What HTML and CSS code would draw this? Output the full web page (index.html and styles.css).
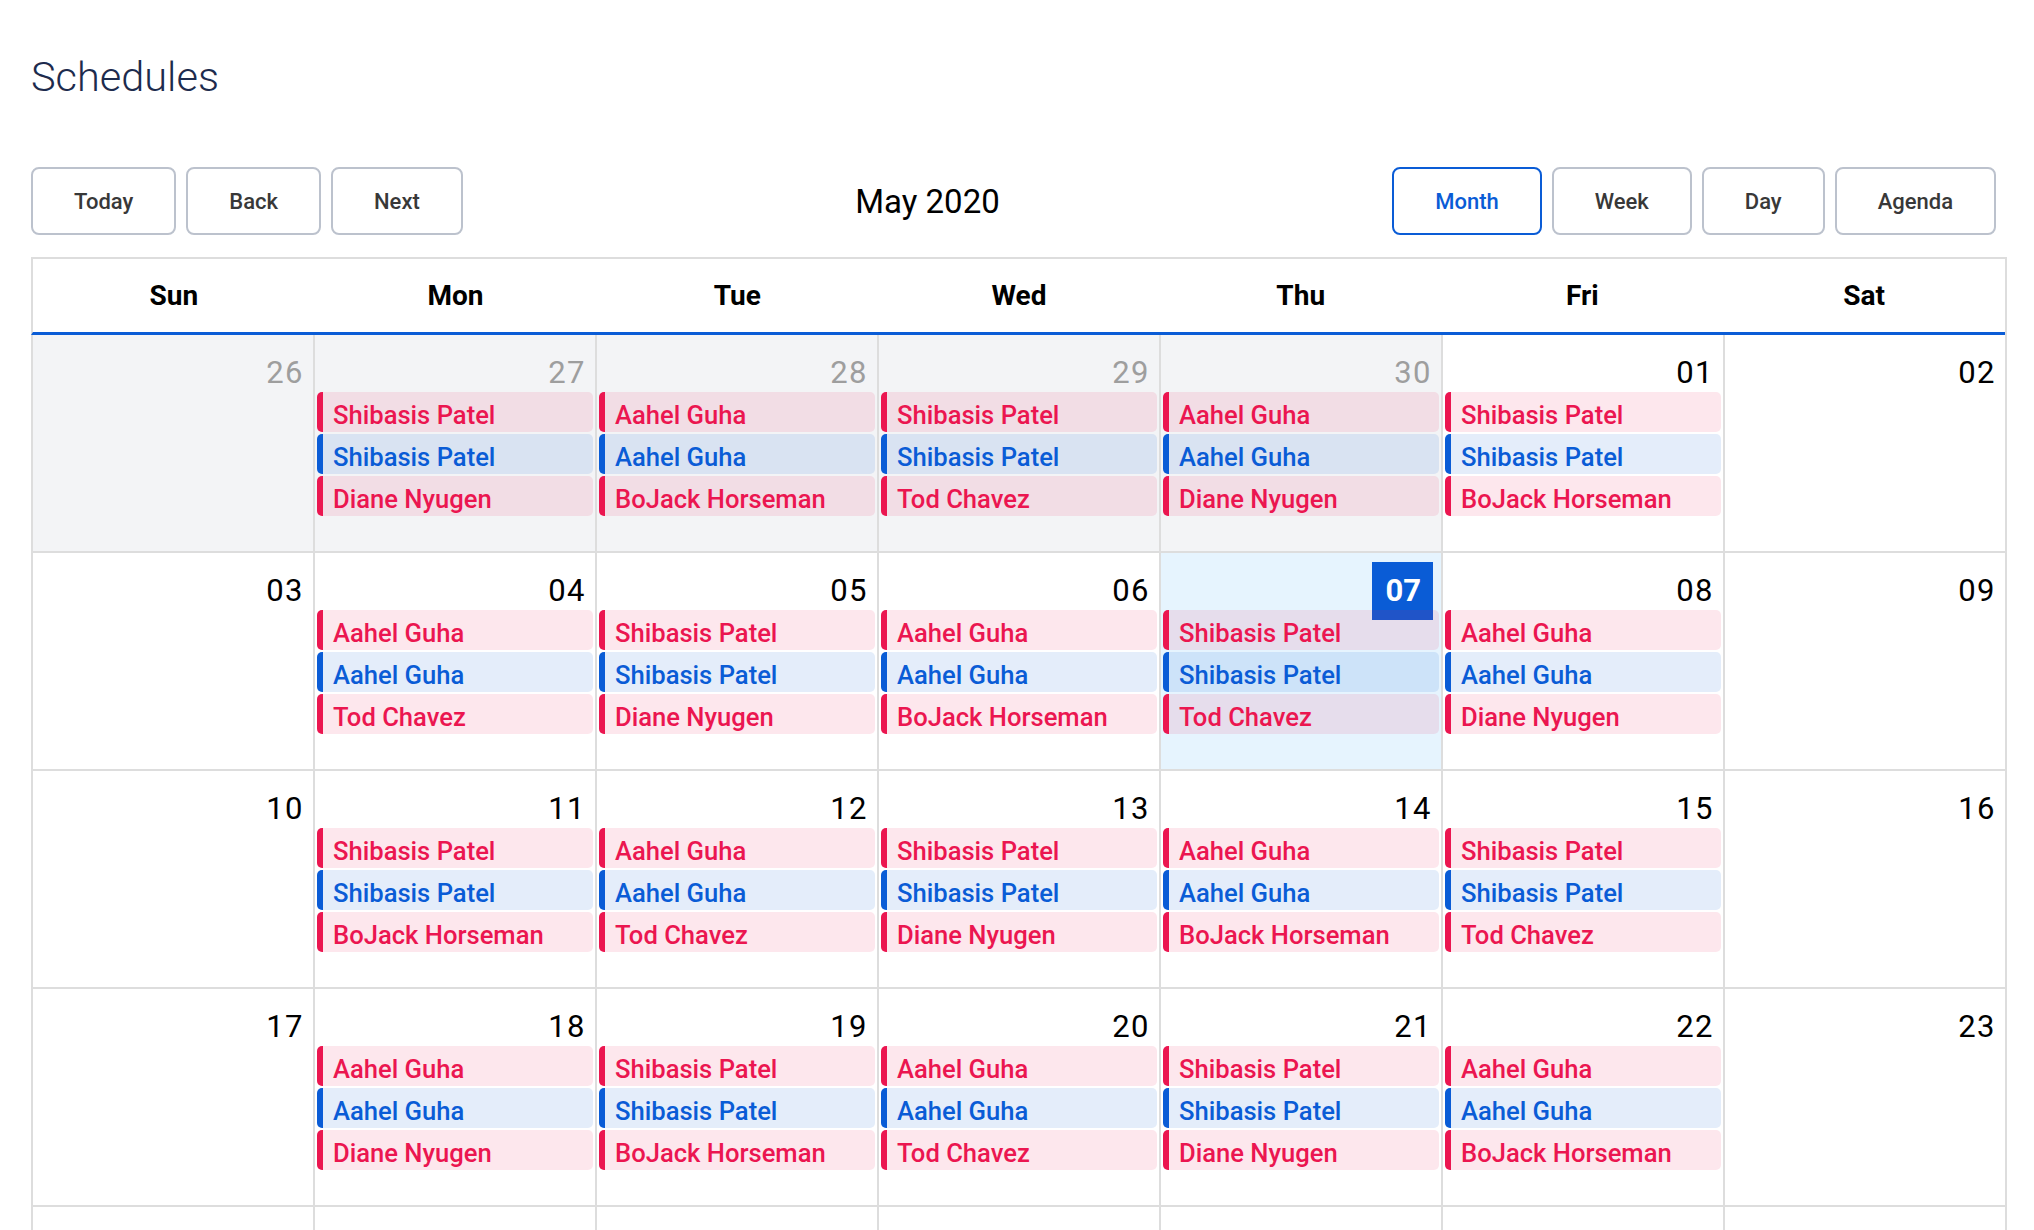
FILE: index.html
```html
<!DOCTYPE html>
<html lang="en">
<head>
<meta charset="utf-8">
<title>Schedules</title>
<link rel="stylesheet" href="styles.css">
</head>
<body>
<div class="page">
  <h1 class="title">Schedules</h1>
  <div class="toolbar">
    <div class="btn-group">
      <button class="btn">Today</button>
      <button class="btn">Back</button>
      <button class="btn">Next</button>
    </div>
    <span class="label">May 2020</span>
    <div class="btn-group">
      <button class="btn active">Month</button>
      <button class="btn">Week</button>
      <button class="btn">Day</button>
      <button class="btn">Agenda</button>
    </div>
  </div>

  <div class="calendar">
    <div class="head">
      <div class="head-cell">Sun</div>
      <div class="head-cell">Mon</div>
      <div class="head-cell">Tue</div>
      <div class="head-cell">Wed</div>
      <div class="head-cell">Thu</div>
      <div class="head-cell">Fri</div>
      <div class="head-cell">Sat</div>
    </div>

    <div class="week">
      <div class="day off"><div class="date"><span>26</span></div></div>
      <div class="day off"><div class="date"><span>27</span></div>
        <div class="event red">Shibasis Patel</div><div class="event blue">Shibasis Patel</div><div class="event red">Diane Nyugen</div></div>
      <div class="day off"><div class="date"><span>28</span></div>
        <div class="event red">Aahel Guha</div><div class="event blue">Aahel Guha</div><div class="event red">BoJack Horseman</div></div>
      <div class="day off"><div class="date"><span>29</span></div>
        <div class="event red">Shibasis Patel</div><div class="event blue">Shibasis Patel</div><div class="event red">Tod Chavez</div></div>
      <div class="day off"><div class="date"><span>30</span></div>
        <div class="event red">Aahel Guha</div><div class="event blue">Aahel Guha</div><div class="event red">Diane Nyugen</div></div>
      <div class="day"><div class="date"><span>01</span></div>
        <div class="event red">Shibasis Patel</div><div class="event blue">Shibasis Patel</div><div class="event red">BoJack Horseman</div></div>
      <div class="day"><div class="date"><span>02</span></div></div>
    </div>

    <div class="week">
      <div class="day"><div class="date"><span>03</span></div></div>
      <div class="day"><div class="date"><span>04</span></div>
        <div class="event red">Aahel Guha</div><div class="event blue">Aahel Guha</div><div class="event red">Tod Chavez</div></div>
      <div class="day"><div class="date"><span>05</span></div>
        <div class="event red">Shibasis Patel</div><div class="event blue">Shibasis Patel</div><div class="event red">Diane Nyugen</div></div>
      <div class="day"><div class="date"><span>06</span></div>
        <div class="event red">Aahel Guha</div><div class="event blue">Aahel Guha</div><div class="event red">BoJack Horseman</div></div>
      <div class="day today"><div class="date"><span class="today-num">07</span></div>
        <div class="event red">Shibasis Patel</div><div class="event blue">Shibasis Patel</div><div class="event red">Tod Chavez</div></div>
      <div class="day"><div class="date"><span>08</span></div>
        <div class="event red">Aahel Guha</div><div class="event blue">Aahel Guha</div><div class="event red">Diane Nyugen</div></div>
      <div class="day"><div class="date"><span>09</span></div></div>
    </div>

    <div class="week">
      <div class="day"><div class="date"><span>10</span></div></div>
      <div class="day"><div class="date"><span>11</span></div>
        <div class="event red">Shibasis Patel</div><div class="event blue">Shibasis Patel</div><div class="event red">BoJack Horseman</div></div>
      <div class="day"><div class="date"><span>12</span></div>
        <div class="event red">Aahel Guha</div><div class="event blue">Aahel Guha</div><div class="event red">Tod Chavez</div></div>
      <div class="day"><div class="date"><span>13</span></div>
        <div class="event red">Shibasis Patel</div><div class="event blue">Shibasis Patel</div><div class="event red">Diane Nyugen</div></div>
      <div class="day"><div class="date"><span>14</span></div>
        <div class="event red">Aahel Guha</div><div class="event blue">Aahel Guha</div><div class="event red">BoJack Horseman</div></div>
      <div class="day"><div class="date"><span>15</span></div>
        <div class="event red">Shibasis Patel</div><div class="event blue">Shibasis Patel</div><div class="event red">Tod Chavez</div></div>
      <div class="day"><div class="date"><span>16</span></div></div>
    </div>

    <div class="week">
      <div class="day"><div class="date"><span>17</span></div></div>
      <div class="day"><div class="date"><span>18</span></div>
        <div class="event red">Aahel Guha</div><div class="event blue">Aahel Guha</div><div class="event red">Diane Nyugen</div></div>
      <div class="day"><div class="date"><span>19</span></div>
        <div class="event red">Shibasis Patel</div><div class="event blue">Shibasis Patel</div><div class="event red">BoJack Horseman</div></div>
      <div class="day"><div class="date"><span>20</span></div>
        <div class="event red">Aahel Guha</div><div class="event blue">Aahel Guha</div><div class="event red">Tod Chavez</div></div>
      <div class="day"><div class="date"><span>21</span></div>
        <div class="event red">Shibasis Patel</div><div class="event blue">Shibasis Patel</div><div class="event red">Diane Nyugen</div></div>
      <div class="day"><div class="date"><span>22</span></div>
        <div class="event red">Aahel Guha</div><div class="event blue">Aahel Guha</div><div class="event red">BoJack Horseman</div></div>
      <div class="day"><div class="date"><span>23</span></div></div>
    </div>

    <div class="week">
      <div class="day"></div>
      <div class="day"></div>
      <div class="day"></div>
      <div class="day"></div>
      <div class="day"></div>
      <div class="day"></div>
      <div class="day"></div>
    </div>
  </div>
</div>
</body>
</html>
```
FILE: styles.css
```css
* {
  box-sizing: border-box;
}

html, body {
  margin: 0;
  background: #ffffff;
}

body {
  font-family: Roboto, "Liberation Sans", Arial, sans-serif;
  color: #000;
}

.page {
  padding: 0 27px 0 31px;
}

.title {
  margin: 0;
  padding-top: 57px;
  height: 97px;
  font-size: 41.5px;
  line-height: 40px;
  font-weight: 300;
  color: #1d2b4d;
}

.toolbar {
  margin-top: 70px;
  height: 68px;
  display: flex;
  align-items: center;
  padding-right: 11px;
}

.btn-group {
  display: flex;
  gap: 10px;
}

.btn {
  height: 68px;
  padding: 0 41px;
  border: 2px solid #bcc2cd;
  border-radius: 8px;
  background: #ffffff;
  font-family: Roboto, "Liberation Sans", Arial, sans-serif;
  font-size: 22px;
  font-weight: 500;
  color: #383838;
  cursor: pointer;
}

.btn.active {
  border-color: #0a5cd6;
  color: #0a5cd6;
}

.label {
  flex: 1;
  text-align: center;
  font-size: 33px;
  font-weight: 400;
  color: #000;
}

.calendar {
  margin-top: 22px;
  border-top: 2px solid #dddddd;
  border-right: 2px solid #dddddd;
}

.head {
  display: grid;
  grid-template-columns: repeat(7, 1fr);
  height: 76px;
  border-left: 2px solid #dddddd;
  border-bottom: 3px solid #0a5cd6;
}

.head-cell {
  display: flex;
  align-items: center;
  justify-content: center;
  font-size: 28px;
  font-weight: 700;
  color: #000;
}

.week {
  display: grid;
  grid-template-columns: repeat(7, 1fr);
  height: 218px;
  border-bottom: 2px solid #dddddd;
}

.day {
  min-width: 0;
  padding: 23px 2px 0 2px;
  border-left: 2px solid #dddddd;
  background: #ffffff;
}

.day.off {
  background: #f3f4f6;
}

.day.today {
  background: #e6f4fe;
}

.date {
  display: flex;
  justify-content: flex-end;
  height: 30px;
  margin-bottom: 4px;
  padding-right: 7px;
  font-size: 31px;
  line-height: 30px;
  letter-spacing: 1.5px;
  font-weight: 400;
  color: #000;
}

.day.off .date {
  color: #9e9e9e;
}

.today-num {
  padding: 14px 12px 14px 13px;
  margin: -14px -1px -14px 0;
  background: #0a5cd6;
  color: #ffffff;
  font-weight: 700;
  letter-spacing: 0;
}

.event {
  position: relative;
  height: 40px;
  margin-top: 2px;
  padding: 6px 0 0 10px;
  border-left: 6px solid;
  border-radius: 5px;
  font-size: 25.6px;
  line-height: 34px;
  font-weight: 500;
  white-space: nowrap;
  overflow: hidden;
}

.date + .event {
  margin-top: 0;
}

.event.red {
  color: #eb1650;
  border-left-color: #eb1650;
  background: rgba(235, 22, 80, 0.1);
}

.event.blue {
  color: #0a5cd6;
  border-left-color: #0a5cd6;
  background: rgba(10, 92, 214, 0.11);
}
```
